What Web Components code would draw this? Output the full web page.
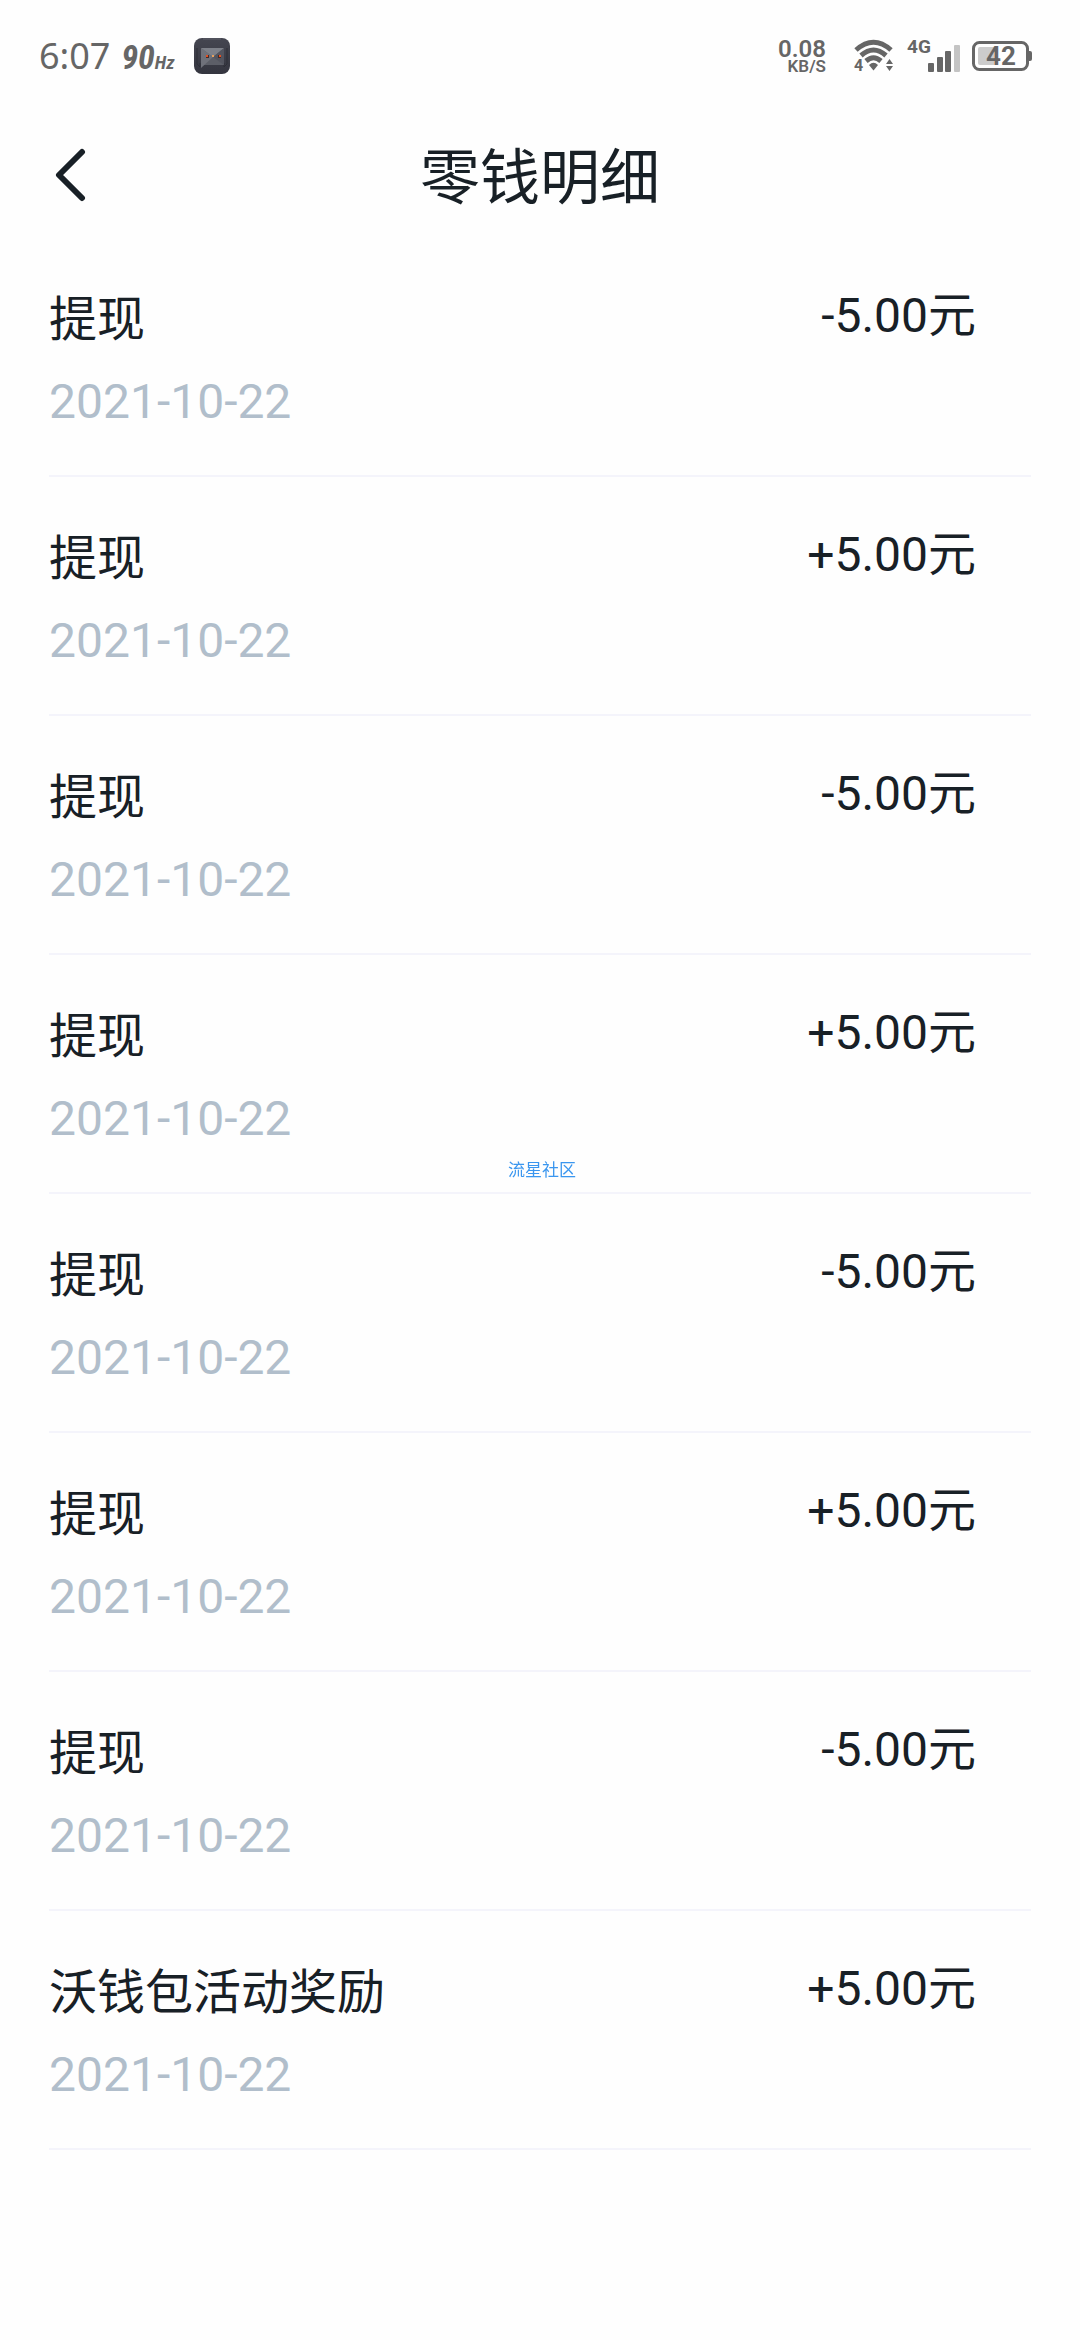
<!DOCTYPE html>
<html lang="zh-CN">
<head>
<meta charset="utf-8">
<meta name="viewport" content="width=device-width, initial-scale=1">
<title>零钱明细</title>
<style>
  :root { --ink: #182026; --muted: #b1becb; --line: #f4f4fb; --status: #666; }
  body { margin: 0; min-height: 100vh; background: #fefefe; color: var(--ink);
    font-family: Roboto, "Noto Sans CJK SC", sans-serif; }
</style>
</head>
<body>
<wallet-page></wallet-page>
<script>
function define(name, html) {
  const template = document.createElement('template');
  template.innerHTML = html;
  customElements.define(name, class extends HTMLElement {
    constructor() {
      super();
      this.attachShadow({ mode: 'open' }).append(template.content.cloneNode(true));
    }
  });
}

define('status-bar', `
<style>
  :host { display: flex; justify-content: space-between; align-items: center; height: 112px; padding: 0 48px 0 39px; color: var(--status); box-sizing: border-box; }
  .side, .clock { display: flex; align-items: center; }
  .clock { align-items: baseline; gap: 11px; padding-top: 4px; }
  .time { font: 36px/44px "Noto Sans", sans-serif; }
  .rate { font: italic bold 34px/40px "Liberation Sans Narrow", "Roboto Condensed", Roboto, sans-serif; }
  .rate small { font-size: 19px; }
  .app { margin-left: 20px; }
  .speed { display: flex; flex-direction: column; align-items: flex-end; font-weight: 600; font-size: 24px; line-height: 20px; }
  .speed small { font-size: 17px; line-height: 14px; }
  svg { display: block; }
  text { font-family: Roboto, sans-serif; font-weight: 700; fill: #666; }
</style>
<div class="side">
  <div class="clock"><span class="time">6:07</span><span class="rate">90<small>Hz</small></span></div>
  <svg class="app" width="36" height="36" viewBox="0 0 36 36">
    <defs><linearGradient id="g" x2="0" y2="1"><stop stop-color="#454651"/><stop offset="1" stop-color="#34353f"/></linearGradient></defs>
    <rect width="36" height="36" rx="8" fill="url(#g)"/>
    <path d="M9 1h18" stroke="#5d5e69" stroke-width="1"/>
    <path d="M3 10v16l3 3v-4M33 10v16l-3 3v-4" fill="none" stroke="#2d2e37"/>
    <path d="M7 10h23v17H9z" fill="#5c5e67"/>
    <path d="M7 10h23L19 19z" fill="#7d8089"/>
    <path d="M7 10l12 9L7 30z" fill="#6f717a"/>
    <path d="M30 10v17L19 19z" fill="#53555f"/>
    <path d="M12 17h3v3h-3zM24 17h3v3h-3z" fill="#452a26"/>
    <path d="M12 18h2M25 18h2" stroke="#e85020" stroke-width="2"/>
    <path d="M18 18h2" stroke="#e9a25d" stroke-width="2"/>
  </svg>
</div>
<div class="side">
  <span class="speed"><span>0.08</span><small>KB/S</small></span>
  <svg width="180" height="46" viewBox="852 32 180 46" style="margin-left:26px">
    <g fill="none" stroke="#666" stroke-width="5">
      <path d="M856 49Q873.500 33.500 891 49"/>
      <path d="M861 54.500Q873.500 43.500 886 54.500"/>
      <path d="M866 60Q873.500 53.500 881 60"/>
    </g>
    <path d="M869 64q4.500-4.500 9 0l-4.500 5.500z" fill="#666"/>
    <text x="854" y="70" font-size="16">4</text>
    <path d="M886 63l3.500-5 3.500 5zM886 65h7l-3.500 5z" fill="#666"/>
    <text x="907" y="52" font-size="19">4G</text>
    <g fill="#666"><rect x="928" y="62" width="6" height="9" rx="1"/><rect x="937" y="56" width="6" height="15" rx="1"/><rect x="945" y="50" width="6" height="21" rx="1"/></g>
    <rect x="954" y="44" width="6" height="27" rx="1" fill="#c4c4c4"/>
    <rect x="973.500" y="41.500" width="54" height="27" rx="6" fill="none" stroke="#666" stroke-width="3"/>
    <path d="M980 46h14v18h-14q-2 0-2-2V48q0-2 2-2z" fill="#ccc"/>
    <path d="M1029 50h1q2 0 2 2v6q0 2-2 2h-1z" fill="#666"/>
    <text x="986" y="64" font-size="26">42</text>
  </svg>
</div>`);

define('nav-header', `
<style>
  :host { display: grid; grid-template-columns: 140px 1fr 140px; align-items: center; height: 126px; }
  button { border: 0; background: none; padding: 0 0 0 54px; margin: 0; height: 100%; text-align: left; color: inherit; }
  svg { display: block; }
  h1 { margin: 0; padding-top: 8px; font-size: 60px; line-height: 72px; font-weight: 400; text-align: center; }
</style>
<button type="button" aria-label="返回"><svg width="32" height="56" viewBox="0 0 32 56"><path d="M28 5L5 28l23 23" fill="none" stroke="currentColor" stroke-width="6" stroke-linecap="round" stroke-linejoin="round"/></svg></button>
<h1><slot></slot></h1>`);

define('bill-item', `
<style>
  :host { display: flex; justify-content: space-between; align-items: flex-start; margin: 0 49px; padding: 50px 55px 45px 0; border-bottom: 2px solid var(--line); font-size: 48px; line-height: 56px; }
  .info { display: flex; flex-direction: column; gap: 26px; padding-top: 4px; }
  .date { color: var(--muted); }
</style>
<div class="info"><slot name="title"></slot><span class="date"><slot name="date"></slot></span></div>
<slot name="amount"></slot>`);

define('water-mark', `
<style>
  :host { position: fixed; inset: 0; display: grid; place-items: center; padding-left: 4px; pointer-events: none; color: #3a96ef; font-size: 17px; line-height: 20px; }
</style>
<span><slot></slot></span>`);

const records = [
  ['提现', '-5.00元'], ['提现', '+5.00元'], ['提现', '-5.00元'], ['提现', '+5.00元'],
  ['提现', '-5.00元'], ['提现', '+5.00元'], ['提现', '-5.00元'], ['沃钱包活动奖励', '+5.00元']
];
define('wallet-page', `
<style>:host, main { display: block; }</style>
<status-bar></status-bar>
<nav-header>零钱明细</nav-header>
<main>${records.map(([title, amount]) => `<bill-item>
  <span slot="title">${title}</span>
  <time slot="date" datetime="2021-10-22">2021-10-22</time>
  <span slot="amount">${amount}</span>
</bill-item>`).join('')}</main>
<water-mark>流星社区</water-mark>`);
</script>
</body>
</html>
